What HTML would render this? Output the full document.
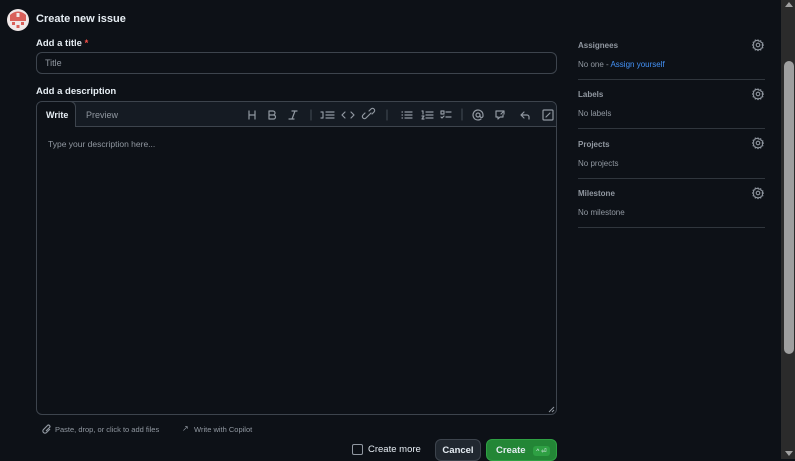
<!DOCTYPE html>
<html><head><meta charset="utf-8"><style>
*{box-sizing:border-box;margin:0;padding:0}
body{width:795px;height:459px;background:#0d1117;font-family:"Liberation Sans",sans-serif;color:#e6edf3;position:relative;overflow:hidden;font-size:9px}
.abs{position:absolute}
.lbl{font-weight:bold;font-size:9.5px;color:#e6edf3}
.ic{stroke:#9198a1;fill:none;stroke-width:1.2;stroke-linecap:round;stroke-linejoin:round}
.side{left:578px;width:187px;color:#9198a1}
.side .h{font-size:8px;color:#9198a1;font-weight:bold}
.side .v{font-size:8px;margin-top:10px}
.hr{position:absolute;left:578px;width:187px;height:1px;background:#30363d}
</style></head><body>
<svg class="abs" style="left:7px;top:9px" width="22" height="22" viewBox="0 0 22 22"><circle cx="11" cy="11" r="11" fill="#f0e8e8"/><path d="M3 6 A11 11 0 0 1 19 6 L19 12 L3 12Z" fill="#d9605a"/><rect x="9.5" y="4" width="3" height="4" fill="#f0e8e8"/><rect x="5" y="13" width="3" height="3" fill="#d9605a"/><rect x="14" y="13" width="3" height="3" fill="#d9605a"/><rect x="9.5" y="16" width="3" height="3" fill="#d9605a"/></svg>
<div class="abs" style="left:36px;top:13px;font-size:11px;font-weight:bold">Create new issue</div>
<div class="abs lbl" style="left:36px;top:38px">Add a title <span style="color:#f85149">*</span></div>
<div class="abs" style="left:36px;top:52px;width:521px;height:22px;border:1px solid #3d444d;border-radius:6px;background:#0d1117;padding:5px 8px;color:#9198a1;font-size:9px">Title</div>
<div class="abs lbl" style="left:36px;top:86px">Add a description</div>
<div class="abs" style="left:36px;top:101px;width:521px;height:314px;border:1px solid #3d444d;border-radius:6px;background:#0d1117;overflow:hidden">
 <div style="height:25px;background:#151b23;border-bottom:1px solid #3d444d;position:relative">
  <div style="position:absolute;left:-1px;top:-1px;width:40px;height:26px;background:#0d1117;border:1px solid #3d444d;border-bottom:none;border-radius:6px 6px 0 0;font-size:9px;color:#e6edf3;padding:8px 0 0 9px;font-weight:bold">Write</div>
  <div style="position:absolute;left:49px;top:8px;color:#9198a1;font-size:9px">Preview</div>
  <svg style="position:absolute;left:205px;top:5px" width="315" height="16" viewBox="0 0 315 16">
   <g class="ic">
   <path d="M7 4v8M13 4v8M7 8h6"/>
   <path d="M27 4h4a2 2 0 0 1 0 4h-4zM27 8h4.5a2 2 0 0 1 0 4H27zM27 4v8"/>
   <path d="M50 4h5M47 12h5M53 4l-3 8"/>
   <path d="M69 3v10" stroke="#3d444d"/>
   <g transform="translate(2 0)"><path d="M77 5h2v6M77 11h2M82 5h8M82 8h8M82 11h8"/>
   <path d="M101 5l-3 3 3 3M107 5l3 3-3 3"/></g>
   <g transform="translate(3 0)"><path d="M123 9l-2 2a2 2 0 0 1-3-3l2-2M127 7l2-2a2 2 0 0 0-3-3l-2 2M122 10l4-4"/></g>
   <path d="M145 3v10" stroke="#3d444d"/>
   <g transform="translate(10 0)"><path d="M150 5h.5M150 8h.5M150 11h.5M153 5h7M153 8h7M153 11h7"/></g>
   <g transform="translate(7 0)"><path d="M173 4h1v3M173 9h2l-2 3h2M177 5h7M177 8h7M177 11h7"/></g>
   <g transform="translate(3 0)"><path d="M196 4h3v3h-3zM201 5h5M196 10l1 1 2-2M201 10h5"/></g>
   <path d="M220 2v11" stroke="#3d444d"/>
   <g transform="translate(2 0)"><circle cx="234" cy="8" r="2"/><path d="M236 8v1a1.5 1.5 0 0 0 3 0v-1a5 5 0 1 0-2 4"/></g>
   <g transform="translate(-2 0)"><path d="M261 4h-5v6h2v2l2-2h3v-2M261 4h3v3M264 4l-3 3"/></g>
   <path d="M282 5l-3 3 3 3M279 8h6a2 2 0 0 1 2 2v2"/>
   <rect x="301" y="3" width="10" height="10" rx="1"/><path d="M304 10l4-4"/>
   </g>
  </svg>
 </div>
 <div style="padding:12px 11px;color:#9198a1;font-size:8.5px">Type your description here...</div>
 <svg style="position:absolute;right:1px;bottom:1px" width="8" height="8"><path d="M7 2L2 7M7 5L5 7" stroke="#9198a1" stroke-width="1"/></svg>
</div>
<svg class="abs" style="left:42px;top:424px" width="10" height="11" viewBox="0 0 10 11"><path d="M8 5L4.5 8.5a2 2 0 0 1-3-3L5.5 1.5a1.3 1.3 0 0 1 2 2L4 7" stroke="#9198a1" fill="none" stroke-width="1.2"/></svg>
<div class="abs" style="left:55px;top:425px;font-size:7.5px;color:#9198a1">Paste, drop, or click to add files</div>
<div class="abs" style="left:182px;top:424px;font-size:8px;color:#9198a1">↗</div>
<div class="abs" style="left:194px;top:425px;font-size:7.5px;color:#9198a1">Write with Copilot</div>
<div class="abs" style="left:352px;top:444px;width:11px;height:11px;border:1px solid #9198a1;border-radius:2px"></div>
<div class="abs" style="left:368px;top:444px;font-size:9.5px">Create more</div>
<div class="abs" style="left:435px;top:439px;width:46px;height:22px;background:#212830;border:1px solid #3d444d;border-radius:6px;font-size:9.5px;font-weight:bold;text-align:center;padding-top:5px">Cancel</div>
<div class="abs" style="left:486px;top:439px;width:71px;height:22px;background:#238636;border:1px solid #2ea043;border-radius:6px;font-size:9.5px;font-weight:bold;padding:5px 0 0 9px">Create <span style="display:inline-block;margin-left:5px;background:#2ea043;border-radius:3px;font-size:6.5px;padding:1px 3px;font-weight:normal">^ ⏎</span></div>

<div class="abs side" style="top:41px"><div class="h">Assignees</div><div class="v">No one - <span style="color:#4493f8">Assign yourself</span></div></div>
<div class="hr" style="top:79px"></div>
<div class="abs side" style="top:90px"><div class="h">Labels</div><div class="v">No labels</div></div>
<div class="hr" style="top:128px"></div>
<div class="abs side" style="top:140px"><div class="h">Projects</div><div class="v">No projects</div></div>
<div class="hr" style="top:178px"></div>
<div class="abs side" style="top:189px"><div class="h">Milestone</div><div class="v">No milestone</div></div>
<div class="hr" style="top:227px"></div>
<svg class="abs" style="left:752px;top:39px" width="12" height="170" viewBox="0 0 12 170">
 <g fill="none" stroke="#9198a1" stroke-width="1.1">
 <g id="g"><circle cx="6" cy="6" r="1.8"/><path d="M6 1l1 1.3 1.7-.5.4 1.7 1.7.5-.5 1.7L11.5 6l-1.2 1 .5 1.7-1.7.5-.4 1.7-1.7-.5L6 11.5 5 10.4l-1.7.5-.4-1.7-1.7-.5.5-1.7L.5 6l1.2-1-.5-1.7 1.7-.5.4-1.7 1.7.5z"/></g>
 <use href="#g" y="49"/><use href="#g" y="98"/><use href="#g" y="148"/>
 </g>
</svg>
<div class="abs" style="left:781px;top:0;width:14px;height:459px;background:#2b2b2b"></div>
<div class="abs" style="left:784px;top:61px;width:10px;height:293px;background:#9f9f9f;border-radius:5px"></div>
<div class="abs" style="left:784px;top:2px;width:0;height:0;border-left:4px solid transparent;border-right:4px solid transparent;border-bottom:5px solid #a0a0a0;margin-left:1px"></div>
<div class="abs" style="left:785px;top:451px;width:0;height:0;border-left:4px solid transparent;border-right:4px solid transparent;border-top:5px solid #a0a0a0"></div>
</body></html>
